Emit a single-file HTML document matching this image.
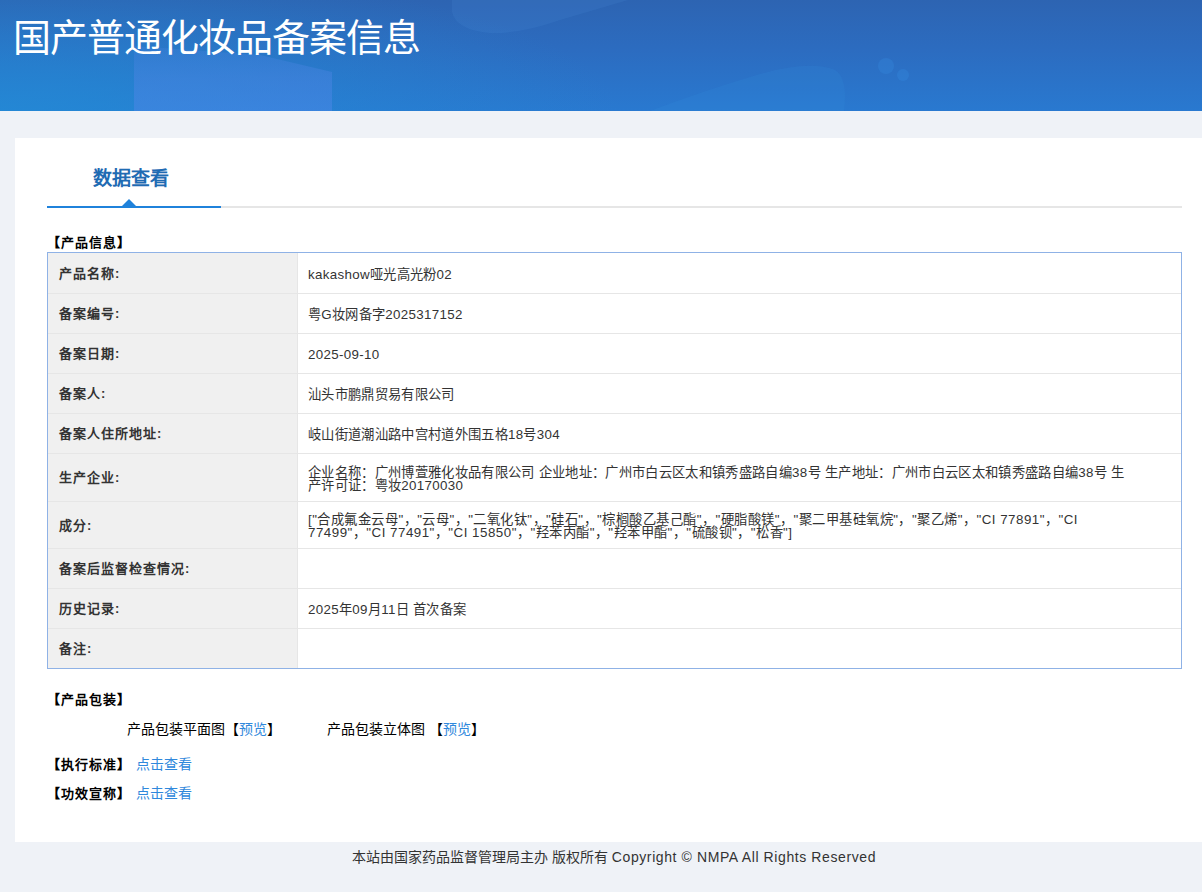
<!DOCTYPE html>
<html lang="zh-CN">
<head>
<meta charset="utf-8">
<title>国产普通化妆品备案信息</title>
<style>
*{box-sizing:border-box;margin:0;padding:0}
html,body{width:1202px;height:892px;overflow:hidden}
body{position:relative;background:#eff2f7;font-family:"Liberation Sans",sans-serif;font-size:14px;color:#333}
a{color:#2f88dc;text-decoration:none}
.hd{position:absolute;left:0;top:0;width:1202px;height:111px;overflow:hidden;
 background:radial-gradient(ellipse 620px 150px at 0 100%,rgba(34,140,214,.75),rgba(34,140,214,0) 100%),linear-gradient(180deg,#2d64b2 0%,#2c6cc0 45%,#2979d0 100%)}
.hd svg{position:absolute;left:0;top:0}
.hd h1{position:absolute;left:13px;top:13px;font-size:38px;letter-spacing:-1px;line-height:50px;font-weight:normal;color:#fff;white-space:nowrap}
.card{position:absolute;left:15px;top:138px;width:1200px;height:704px;background:#fff}
.tab{position:absolute;left:32px;top:20px;width:1135px;height:50px;border-bottom:2px solid #e6e6e6}
.tab .on{position:absolute;left:0;top:0;width:174px;height:50px;border-bottom:2px solid #1f82db}
.tab .on span{position:absolute;left:46px;top:7px;font-size:19px;line-height:28px;font-weight:bold;color:#1f6bb3;white-space:nowrap}
.tab .on i{position:absolute;left:75px;bottom:0;width:0;height:0;border-left:7px solid transparent;border-right:7px solid transparent;border-bottom:7px solid #1f82db}
.sec{position:absolute;left:32px;font-size:13px;letter-spacing:1px;line-height:20px;font-weight:bold;color:#000;white-space:nowrap}
table{position:absolute;left:32px;top:114px;width:1135px;border:1px solid #8fb2e6;border-collapse:separate;border-spacing:0;table-layout:fixed}
th,td{height:40px;padding:2px 10px 0;border-bottom:1px solid #e6e6e6;text-align:left;vertical-align:middle}
th{width:250px;padding:0 10px 2px 11px;background:#f0f0f0;font-size:13px;letter-spacing:1px;font-weight:bold;color:#333;border-right:1px solid #e6e6e6}
td{font-size:13.333px;line-height:13px;letter-spacing:.333px;color:#333;background:#fff}
td.ing{letter-spacing:.5px}
tr:first-child th,tr:first-child td{height:41px}
tr:first-child td{padding-top:3px}
tr:last-child th,tr:last-child td{border-bottom:0;height:39px}
tr.two th,tr.two td{height:48px}
tr.two td,tr.two2 td{white-space:nowrap}
tr.two2 th,tr.two2 td{height:47px}
.pk{position:absolute;top:581px;font-size:14px;line-height:20px;color:#000;white-space:nowrap}
.ft{position:absolute;left:352px;top:842px;height:50px;font-size:14px;line-height:30px;color:#333;white-space:nowrap}
</style>
</head>
<body>
<div class="hd">
<svg width="1202" height="111" viewBox="0 0 1202 111">
<defs><linearGradient id="pg" x1="0" y1="0" x2="0" y2="1"><stop offset="0" stop-color="#4a84e2" stop-opacity=".25"/><stop offset=".5" stop-color="#4a84e2" stop-opacity=".5"/><stop offset="1" stop-color="#4686e4" stop-opacity=".62"/></linearGradient></defs>
<polygon points="134,46 260,55 332,72 332,111 134,111" fill="url(#pg)"/>
<path d="M452,0 L452,12 Q456,30 490,33 Q520,34 560,20 L628,0 Z" fill="#5aa0f0" opacity=".11"/>
<path d="M650,111 Q700,92 760,74 Q810,60 835,70 Q848,78 844,111 Z" fill="#3aa0e8" opacity=".12"/>
<circle cx="886" cy="66" r="8" fill="#3a9cf0" opacity=".2"/>
<circle cx="903" cy="75" r="6" fill="#3a9cf0" opacity=".2"/>
</svg>
<h1>国产普通化妆品备案信息</h1>
</div>
<div class="card">
<div class="tab"><div class="on"><span>数据查看</span><i></i></div></div>
<div class="sec" style="top:95px">【产品信息】</div>
<table>
<tr><th>产品名称:</th><td>kakashow哑光高光粉02</td></tr>
<tr><th>备案编号:</th><td>粤G妆网备字2025317152</td></tr>
<tr><th>备案日期:</th><td>2025-09-10</td></tr>
<tr><th>备案人:</th><td>汕头市鹏鼎贸易有限公司</td></tr>
<tr><th>备案人住所地址:</th><td>岐山街道潮汕路中宫村道外围五格18号304</td></tr>
<tr class="two"><th>生产企业:</th><td>企业名称：广州博萱雅化妆品有限公司 企业地址：广州市白云区太和镇秀盛路自编38号 生产地址：广州市白云区太和镇秀盛路自编38号 生<br>产许可证：粤妆20170030</td></tr>
<tr class="two2"><th>成分:</th><td class="ing">["合成氟金云母"，"云母"，"二氧化钛"，"硅石"，"棕榈酸乙基己酯"，"硬脂酸镁"，"聚二甲基硅氧烷"，"聚乙烯"，"CI 77891"，"CI<br>77499"，"CI 77491"，"CI 15850"，"羟苯丙酯"，"羟苯甲酯"，"硫酸钡"，"松香"]</td></tr>
<tr><th>备案后监督检查情况:</th><td></td></tr>
<tr><th>历史记录:</th><td>2025年09月11日 首次备案</td></tr>
<tr><th>备注:</th><td></td></tr>
</table>
<div class="sec" style="top:552px">【产品包装】</div>
<div class="pk" style="left:112px">产品包装平面图【<a>预览</a>】</div>
<div class="pk" style="left:312px">产品包装立体图 【<a>预览</a>】</div>
<div class="sec" style="top:616px">【执行标准】 <a style="font-weight:normal;font-size:14px;letter-spacing:0">点击查看</a></div>
<div class="sec" style="top:645px">【功效宣称】 <a style="font-weight:normal;font-size:14px;letter-spacing:0">点击查看</a></div>
</div>
<div class="ft">本站由国家药品监督管理局主办 版权所有 <span style="letter-spacing:.6px">Copyright © NMPA All Rights Reserved</span></div>
</body>
</html>
